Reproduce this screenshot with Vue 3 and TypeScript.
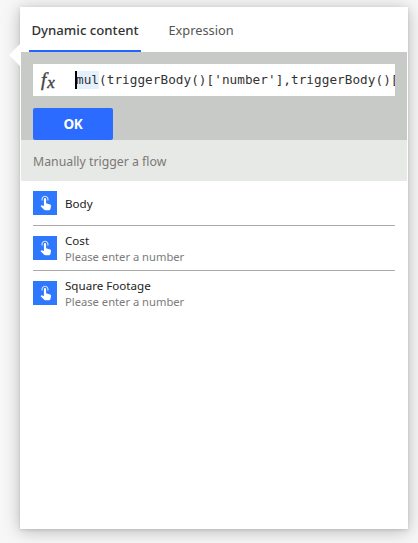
<script setup lang="ts">
interface Item {
  title: string
  hint?: string
}

const items: Item[] = [
  { title: 'Body' },
  { title: 'Cost', hint: 'Please enter a number' },
  { title: 'Square Footage', hint: 'Please enter a number' },
]
</script>

<template>
  <div class="page">
    <section class="panel">
      <i class="pointer"></i>
      <nav class="tabs">
        <button class="tab active">Dynamic content</button>
        <button class="tab">Expression</button>
      </nav>
      <div class="editor">
        <div class="formula">
          <span class="fx">f<sub>x</sub></span>
          <code class="code"><i class="caret"></i><span class="selected">mul</span>(triggerBody()['number'],triggerBody()[</code>
        </div>
        <button class="ok">OK</button>
      </div>
      <h2 class="group">Manually trigger a flow</h2>
      <ul class="list">
        <li v-for="item in items" :key="item.title" class="row">
          <svg class="icon" viewBox="0 0 24 24" width="24" height="24">
            <rect width="24" height="24" fill="#2d78ff" />
            <path d="M9.3 9.6A3 3 0 1 1 14.7 9.6" fill="none" stroke="#dce9ff" stroke-width="1.1" />
            <path
              d="M10.9 8a1.1 1.1 0 0 1 2.2 0v4.3l4 1.3c.7.25 1 .7.9 1.4l-.5 2.8c-.1.9-.6 1.4-1.4 1.4h-3.8c-.6 0-1-.2-1.4-.6l-3.3-3.4.6-.6c.3-.3.6-.3 1-.2l1.7.5z"
              fill="#fff"
            />
          </svg>
          <div class="label">
            <span class="title">{{ item.title }}</span>
            <span v-if="item.hint" class="hint">{{ item.hint }}</span>
          </div>
        </li>
      </ul>
    </section>
  </div>
</template>

<style>
body {
  margin: 0;
  background: #f7f7f7;
}
</style>

<style scoped>
.page {
  box-sizing: border-box;
  width: 418px;
  height: 543px;
  padding: 7px 10px 14px 20px;
  overflow: hidden;
  background: #f7f7f7;
  font-family: "Noto Sans", "Open Sans", sans-serif;
}
.panel {
  position: relative;
  box-sizing: border-box;
  height: 522px;
  padding: 0 1px;
  background: #fff;
  box-shadow: 0 2px 16px rgba(0, 0, 0, 0.26), 0 1px 3px rgba(0, 0, 0, 0.12);
}
.pointer {
  position: absolute;
  left: -11px;
  top: 37px;
  width: 11px;
  height: 22px;
  background: #fff;
  clip-path: polygon(100% 0, 0 50%, 100% 100%);
}
button {
  margin: 0;
  padding: 0;
  border: 0;
  background: none;
  font-family: inherit;
}
.tabs {
  display: flex;
  gap: 18px;
  height: 45px;
  padding-left: 8px;
}
.tab {
  box-sizing: border-box;
  width: 112px;
  height: 45px;
  padding-top: 2px;
  border-bottom: 2px solid transparent;
  color: #555;
  font-size: 12.8px;
  white-space: nowrap;
}
.tab:last-child {
  width: 84px;
}
.tab.active {
  border-color: #2266ff;
  color: #333;
  font-size: 13.2px;
  font-weight: 500;
}
.editor {
  height: 88px;
  box-sizing: border-box;
  padding: 12px 12px 0;
  background: #c8cac7;
}
.formula {
  display: flex;
  align-items: center;
  height: 32px;
  overflow: hidden;
  background: #fff;
}
.fx {
  flex: none;
  width: 34px;
  padding-left: 8px;
  color: #444;
  font: italic 19px/30px "Liberation Serif", serif;
  -webkit-text-stroke: 0.4px #444;
}
.fx sub {
  margin-left: 1px;
  font-size: 17px;
  line-height: 0;
  vertical-align: -2px;
}
.code {
  display: flex;
  align-items: center;
  color: #333;
  font: 12.7px/18px "DejaVu Sans Mono", monospace;
  letter-spacing: 0.04px;
  white-space: pre;
}
.caret {
  width: 2px;
  height: 18px;
  margin-right: -1px;
  background: #000;
  z-index: 1;
}
.selected {
  background: #e5f0fd;
}
.ok {
  display: block;
  width: 80px;
  height: 32px;
  margin-top: 12px;
  border-radius: 2px;
  background: #2b6bff;
  color: #fff;
  font-size: 13.5px;
  font-weight: 700;
  letter-spacing: -0.4px;
}
.group {
  display: flex;
  align-items: center;
  height: 41px;
  margin: 0;
  padding: 1px 0 0 12px;
  box-sizing: border-box;
  background: #e7e9e6;
  color: #7b7875;
  font-size: 12.3px;
  font-weight: 400;
}
.list {
  margin: 0;
  padding: 0 12px;
  list-style: none;
}
.row {
  display: flex;
  align-items: center;
  gap: 8px;
  box-sizing: border-box;
  height: 45px;
  border-bottom: 1px solid #aaa;
}
.row:last-child {
  border-bottom-color: transparent;
}
.icon {
  flex: none;
}
.label {
  display: flex;
  flex-direction: column;
  padding-top: 2px;
  line-height: 16px;
}
.title {
  color: #222;
  font-size: 11.6px;
}
.hint {
  color: #7b7b7b;
  font-size: 11.2px;
}
</style>
